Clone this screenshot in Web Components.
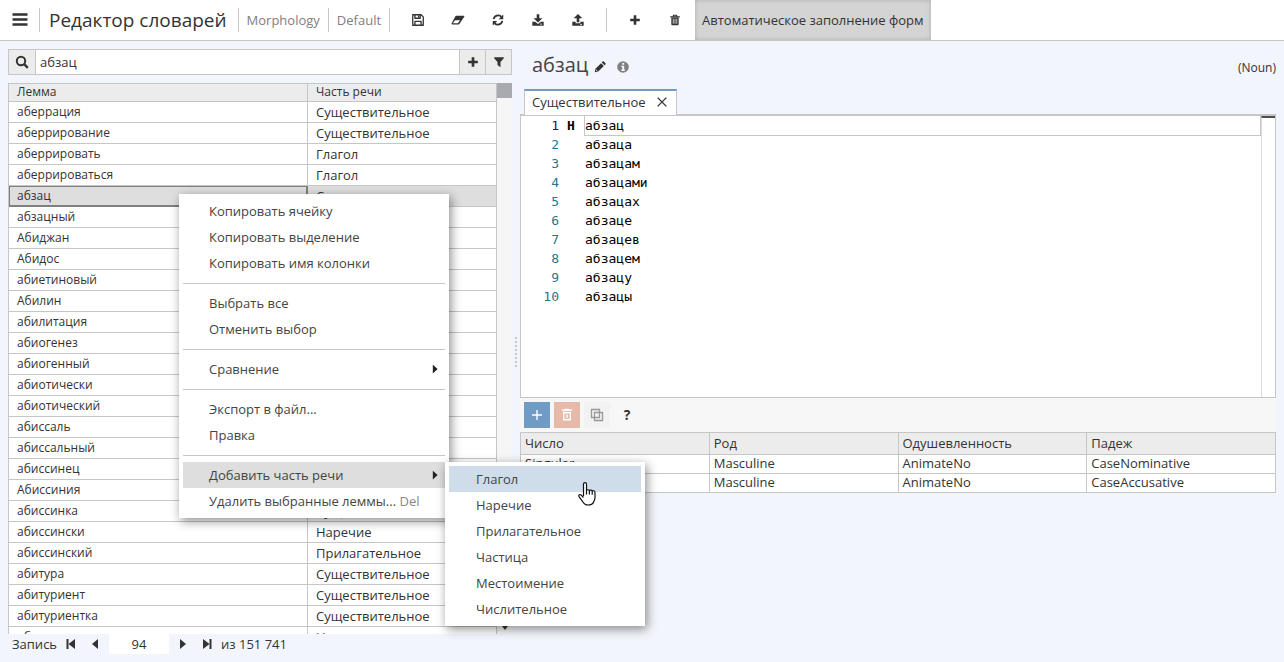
<!DOCTYPE html>
<html lang="ru">
<head>
<meta charset="utf-8">
<title>Редактор словарей</title>
<style>
html, body { margin: 0; height: 100%; }
body {
  --line: #c6c6c6;
  --head: #ececec;
  --page: #f2f5fb;
  --ink: #333;
  background: var(--page);
  color: var(--ink);
  font: 13px/20px "Open Sans", "Noto Sans", sans-serif;
}
</style>
</head>
<body>
<dict-app></dict-app>
<script>
const reset = `
  *, *::before, *::after { box-sizing: border-box; }
  button, input { font: inherit; color: inherit; margin: 0; padding: 0; border: 0; background: none; border-radius: 0; outline: 0; }
  button { display: flex; align-items: center; justify-content: center; }
`;

function define(name, html, setup) {
  const tpl = document.createElement('template');
  tpl.innerHTML = html;
  customElements.define(name, class extends HTMLElement {
    constructor() {
      super();
      this.attachShadow({ mode: 'open' }).append(tpl.content.cloneNode(true));
    }
    connectedCallback() { if (setup) setup(this, this.shadowRoot); }
  });
}

const icons = {
  menu: '<path d="M0.500 2.500h15M.5 7.500h15M.5 12.500h15" stroke="currentColor" stroke-width="2.300"/>',
  save: '<path d="M2 2h9.600L14 4.400V14H2z M4.500 14V9.500h7V14 M4.500 2v4h6V2" fill="none" stroke="currentColor" stroke-width="1.500" stroke-linejoin="round"/><path d="M8 2.500h1.500v2.500H8z" fill="currentColor"/>',
  eraser: '<path d="M6.200 3h8.300c.7 0 1 .7.600 1.300L9.800 12.300c-.3.400-.7.700-1.200.7H1.400c-.7 0-1-.7-.6-1.300L5 3.700c.3-.4.700-.7 1.200-.7zM7.900 11.700l2.500-3.400H4.600l-2.500 3.400z" fill="currentColor" fill-rule="evenodd"/>',
  refresh: '<path d="M3 7a5.200 5.200 0 0 1 9-2.500M13 9a5.200 5.200 0 0 1-9 2.500" fill="none" stroke="currentColor" stroke-width="2"/><path d="M14 1.800V7H8.800zM2 14.200V9h5.200z" fill="currentColor"/>',
  download: '<path d="M6.500 1.500h3V6H13L8 10.800 3 6h3.500zM1.500 10h3.300L8 12.500 11.200 10h3.300v4.500h-13z" fill="currentColor"/><path d="M10.500 12.700h2" stroke="#fff"/>',
  upload: '<path d="M6.500 10.500h3V6H13L8 1.200 3 6h3.500zM1.500 10h3.800v1.800h5.400V10h3.800v4.500h-13z" fill="currentColor"/><path d="M10.500 13h2" stroke="#fff"/>',
  plus: '<path d="M8 2.500v11M2.500 8h11" stroke="currentColor" stroke-width="3"/>',
  trash: '<path d="M6.200 4V2.600h3.600V4M2.500 4.500h11" fill="none" stroke="currentColor" stroke-width="1.300"/><path d="M3.800 5h8.400v7.500c0 1-.5 1.500-1.300 1.500H5.100c-.8 0-1.300-.5-1.300-1.500z" fill="currentColor"/><path d="M6 6.500v5.800M8 6.500v5.800M10 6.500v5.800" stroke="#fff" stroke-width=".8"/>',
  search: '<circle cx="7" cy="7" r="4.200" fill="none" stroke="currentColor" stroke-width="2"/><path d="M10.200 10.200l3.600 3.600" stroke="currentColor" stroke-width="2.400"/>',
  filter: '<path d="M2.500 2.500h11v1.300L9.700 7.900V14L6.300 11.500V7.900L2.500 3.800z" fill="currentColor"/>',
  pencil: '<path d="M2 14l.8-4L9.200 3.600l3.200 3.200L6 13.200zM10 2.800l1-1c.4-.4.900-.4 1.300 0l1.900 1.900c.4.400.4.900 0 1.300l-1 1z" fill="currentColor"/><path d="M3.200 11l1.800 1.800" stroke="#f2f5fb"/>',
  info: '<circle cx="8" cy="8" r="5.800" fill="#808080"/><path d="M7.200 4h2v1.800h-2zM6.300 6.800h2.900v3.900h.8v1.200H6.300v-1.200h.9V8h-.9z" fill="#f2f5fb"/>',
  close: '<path d="M3 3l10 10M13 3L3 13" stroke="currentColor" stroke-width="1.600"/>',
  add: '<path d="M8 3v10M3 8h10" stroke="#fff" stroke-width="1.400"/>',
  bin: '<path d="M3.200 3.200h9.600" stroke="#fff" stroke-width="1.800"/><path d="M6 2.500h4M4.700 5.800h6.600v7H4.700z M8 7.600v3.400" fill="none" stroke="#fff" stroke-width="1.400"/>',
  copy: '<path d="M2.500 2.500h8v8h-8zM5.500 5.500h8v8h-8z" fill="none" stroke="#999" stroke-width="1.300"/>',
  right: '<path d="M5.500 3l5.500 5-5.500 5z" fill="currentColor"/>',
  prev: '<path d="M11 3v10L5 8z" fill="currentColor"/>',
  next: '<path d="M5 3v10l6-5z" fill="currentColor"/>',
  first: '<path d="M4.500 3v10" stroke="currentColor" stroke-width="2"/><path d="M12 3v10L5.500 8z" fill="currentColor"/>',
  last: '<path d="M11.500 3v10" stroke="currentColor" stroke-width="2"/><path d="M4 3v10l6.500-5z" fill="currentColor"/>'
};

define('ui-icon', `<style>
  :host { display: block; width: 14px; height: 14px; flex: none; }
  svg { display: block; width: 100%; height: 100%; }
</style><svg viewBox="0 0 16 16" aria-hidden="true"></svg>`, (el, root) => {
  root.querySelector('svg').innerHTML = icons[el.getAttribute('name')];
});

define('app-toolbar', `<style>${reset}
  :host { display: flex; align-items: center; height: 41px; background: #fff; border-bottom: 1px solid var(--line); }
  button { width: 40px; height: 40px; }
  .menu { width: 39px; }
  .menu ui-icon { width: 16px; height: 16px; }
  h1 { margin: 0; padding: 0 11px 0 9px; font-size: 19px; line-height: 24px; font-weight: 400; }
  h1, a, .group { border-left: 1px solid var(--line); }
  a { color: #808080; text-decoration: none; padding: 0 8px; line-height: 24px; }
  .group { display: flex; align-items: center; height: 24px; padding-left: 8px; }
  .group + .group { margin-left: 8px; }
  .auto { width: auto; padding: 0 7px; background: #d4d4d4; border: 0; box-shadow: inset 0 0 4px #aaa; }
</style>
<button class="menu" aria-label="Меню"><ui-icon name="menu"></ui-icon></button>
<h1>Редактор словарей</h1>
<a href="#morphology">Morphology</a>
<a href="#default">Default</a>
<div class="group">
  <button aria-label="Сохранить"><ui-icon name="save"></ui-icon></button>
  <button aria-label="Очистить"><ui-icon name="eraser"></ui-icon></button>
  <button aria-label="Обновить"><ui-icon name="refresh"></ui-icon></button>
  <button aria-label="Импорт"><ui-icon name="download"></ui-icon></button>
  <button aria-label="Экспорт"><ui-icon name="upload"></ui-icon></button>
</div>
<div class="group">
  <button aria-label="Добавить"><ui-icon name="plus"></ui-icon></button>
  <button aria-label="Удалить"><ui-icon name="trash"></ui-icon></button>
</div>
<button class="auto" aria-pressed="true">Автоматическое заполнение форм</button>`);

define('search-bar', `<style>${reset}
  :host { display: flex; height: 26px; border: 1px solid var(--line); background: #fff; }
  label, button { flex: none; display: flex; align-items: center; justify-content: center; width: 26px; background: var(--head); }
  label { border-right: 1px solid var(--line); width: 27px; }
  label ui-icon { width: 16px; height: 16px; }
  button { border-left: 1px solid var(--line); }
  input { flex: 1; min-width: 0; padding: 0 4px; }
</style>
<label for="q" aria-label="Поиск"><ui-icon name="search"></ui-icon></label>
<input id="q" type="text" value="абзац">
<button aria-label="Добавить"><ui-icon name="plus"></ui-icon></button>
<button aria-label="Фильтр"><ui-icon name="filter"></ui-icon></button>`);

const N = 'Существительное', V = 'Глагол', A = 'Прилагательное', D = 'Наречие';
const lemmas = [
  ['аберрация', N], ['аберрирование', N], ['аберрировать', V], ['аберрироваться', V],
  ['абзац', N], ['абзацный', A], ['Абиджан', N], ['Абидос', N], ['абиетиновый', A],
  ['Абилин', N], ['абилитация', N], ['абиогенез', N], ['абиогенный', A], ['абиотически', D],
  ['абиотический', A], ['абиссаль', N], ['абиссальный', A], ['абиссинец', N], ['Абиссиния', N],
  ['абиссинка', N], ['абиссински', D], ['абиссинский', A], ['абитура', N], ['абитуриент', N],
  ['абитуриентка', N], ['абитуриентски', D]
];

define('lemma-table', `<style>${reset}
  :host { display: flex; min-height: 0; overflow: hidden; }
  .view { flex: 1; min-width: 0; overflow: hidden; }
  table { width: 100%; border-collapse: separate; border-spacing: 0; table-layout: fixed; border-left: 1px solid var(--line); background: #fff; }
  th, td { padding: 0 8px; text-align: left; font-weight: 400; border-right: 1px solid var(--line); border-bottom: 1px solid var(--line); white-space: nowrap; overflow: hidden; }
  th { height: 19px; line-height: 16px; vertical-align: top; font-size: 12px; background: var(--head); border-top: 1px solid var(--line); }
  td { height: 21px; line-height: 20px; }
  td:first-child { font-size: 12px; }
  th:first-child { width: 299px; }
  tr.on td { background: #dedede; }
  tr.on td:first-child { box-shadow: inset 0 -1px #808080, inset -1px 0 #808080, inset 1px 1px #808080; border-color: #808080; }
  .bar { flex: none; width: 15px; background: #f6f6f6; display: flex; flex-direction: column; justify-content: space-between; align-items: center; padding-bottom: 4px; }
  .bar::before { content: ""; width: 15px; height: 15px; background: #a9aab0; }
  .bar::after { content: ""; border: 3px solid transparent; border-top: 4px solid #333; border-bottom: 0; }
</style>
<div class="view"><table><thead><tr><th>Лемма</th><th>Часть речи</th></tr></thead><tbody></tbody></table></div>
<div class="bar"></div>`, (el, root) => {
  root.querySelector('tbody').innerHTML = lemmas.map(([w, p]) =>
    `<tr${w === 'абзац' ? ' class="on"' : ''}><td>${w}</td><td>${p}</td></tr>`).join('');
});

define('record-pager', `<style>${reset}
  :host { display: flex; align-items: center; height: 28px; padding: 0 4px 8px; flex: none; }
  button { width: 24px; height: 20px; }
  label { padding-right: 2px; }
  ui-icon { width: 16px; height: 16px; }
  input { width: 60px; height: 20px; margin: 0 2px; background: #fff; text-align: center; border-radius: 2px; }
  span { padding-left: 2px; }
</style>
<label for="rec">Запись</label>
<button aria-label="Первая"><ui-icon name="first"></ui-icon></button>
<button aria-label="Предыдущая"><ui-icon name="prev"></ui-icon></button>
<input id="rec" type="text" value="94">
<button aria-label="Следующая"><ui-icon name="next"></ui-icon></button>
<button aria-label="Последняя"><ui-icon name="last"></ui-icon></button>
<span>из 151 741</span>`);

define('entry-header', `<style>${reset}
  :host { display: flex; align-items: center; height: 48px; padding-left: 12px; }
  h2 { margin: 0; font-size: 20px; line-height: 24px; font-weight: 400; color: #444; }
  button { margin: 4px 0 0 5px; }
  button + button { margin-left: 8px; }
  button + button ui-icon { width: 16px; height: 16px; }
  span { margin-left: auto; padding-top: 6px; font-size: 12px; }
</style>
<h2>абзац</h2>
<button aria-label="Изменить"><ui-icon name="pencil"></ui-icon></button>
<button aria-label="Сведения"><ui-icon name="info"></ui-icon></button>
<span>(Noun)</span>`);

define('form-editor', `<style>${reset}
  :host { display: flex; flex-direction: column; min-height: 0; }
  .tabs { display: flex; padding-left: 4px; border-bottom: 2px solid var(--line); }
  .tab { display: flex; align-items: center; gap: 9px; height: 27px; margin-bottom: -2px; padding: 0 7px 2px; background: #fff; border: 1px solid var(--line); border-top: 2px solid #729ac3; }
  .body { flex: 1; min-height: 0; display: flex; background: #fff; border: 1px solid var(--line); border-top: 0; }
  ol { flex: 1; min-width: 0; list-style: none; margin: 0; padding: 0; color: #000; font: 13px/19px "DejaVu Sans Mono", "Liberation Mono", monospace; overflow: hidden; }
  li { display: grid; grid-template-columns: 38px 26px 1fr; height: 19px; }
  i { font-style: normal; text-align: right; color: #237893; }
  b { padding-left: 8px; }
  li:first-child i { color: #0b216f; }
  li:first-child span { border: 1px solid var(--line); border-top: 0; line-height: 19px; margin-left: -1px; }
  .ruler { flex: none; width: 14px; border-left: 1px solid #ddd; border-top: 2px solid #4d4d4d; }
</style>
<div class="tabs"><div class="tab">Существительное<button aria-label="Закрыть"><ui-icon name="close"></ui-icon></button></div></div>
<div class="body"><ol></ol><div class="ruler"></div></div>`, (el, root) => {
  const forms = ['абзац', 'абзаца', 'абзацам', 'абзацами', 'абзацах', 'абзаце', 'абзацев', 'абзацем', 'абзацу', 'абзацы'];
  root.querySelector('ol').innerHTML = forms.map((f, i) =>
    `<li><i>${i + 1}</i><b>${i ? '' : 'Н'}</b><span>${f}</span></li>`).join('');
});

define('feature-grid', `<style>${reset}
  :host { display: block; }
  .tools { display: flex; gap: 4px; padding: 4px; background: #f7f7f7; }
  .tools button { width: 26px; height: 26px; background: #f2f2f2; }
  .tools ui-icon { width: 16px; height: 16px; }
  .tools .add { background: #6f9bc4; }
  .tools .del { background: #e7b9a8; }
  .tools .help { background: none; font-weight: 700; font-size: 14px; }
  table { width: 100%; border-collapse: collapse; table-layout: fixed; background: #fff; }
  th, td { border: 1px solid var(--line); padding: 0 4px; text-align: left; vertical-align: top; font-weight: 400; height: 19px; line-height: 17px; }
  th { height: 22px; line-height: 20px; background: var(--head); }
</style>
<div class="tools">
  <button class="add" aria-label="Добавить"><ui-icon name="add"></ui-icon></button>
  <button class="del" aria-label="Удалить"><ui-icon name="bin"></ui-icon></button>
  <button aria-label="Копировать"><ui-icon name="copy"></ui-icon></button>
  <button class="help">?</button>
</div>
<table>
  <thead><tr><th>Число</th><th>Род</th><th>Одушевленность</th><th>Падеж</th></tr></thead>
  <tbody>
    <tr><td>Singular</td><td>Masculine</td><td>AnimateNo</td><td>CaseNominative</td></tr>
    <tr><td>Singular</td><td>Masculine</td><td>AnimateNo</td><td>CaseAccusative</td></tr>
  </tbody>
</table>`);

define('menu-item', `<style>${reset}
  :host { display: block; }
  button { width: 100%; height: 26px; padding: 0 3px 0 var(--indent, 26px); justify-content: flex-start; text-align: left; white-space: nowrap; color: #444; }
  :host([active]) button { background: #dedede; }
  :host([hot]) button { background: #cfdce9; }
  ui-icon { display: none; margin-left: auto; color: #222; }
  :host([more]) ui-icon { display: block; }
</style><button role="menuitem"><slot></slot><ui-icon name="right"></ui-icon></button>`);

define('popup-menu', `<style>${reset}
  :host { display: block; padding: 4px; background: #fff; box-shadow: 2px 3px 10px rgba(0,0,0,.45); }
  ::slotted(hr) { border: 0; border-top: 1px solid var(--line); margin: 7px 0 6px; }
</style><slot></slot>`);

define('hand-pointer', `<style>
  :host { display: block; width: 18px; height: 24px; }
  svg { display: block; }
</style><svg width="18" height="24" viewBox="0 0 18 24" aria-hidden="true">
<path d="M5.500 14V2.200c0-2 3-2 3 0V9c0-1.800 2.900-1.600 2.900.2 0-1.600 2.800-1.400 2.800.4 0-1.400 2.800-1.200 2.800.8v5.300c0 2-.8 3-1.500 4.500-.8 1.800-2.300 2.800-5 2.800-3 0-4.500-1-5.800-3.300L1 14.600c-.8-1.600 1-2.800 2.300-1.500L5.500 15.500M8.500 9v3.500M11.400 9v3.500M14.200 9.800v3" fill="#fff" stroke="#111" stroke-width="1.200" stroke-linejoin="round"/></svg>`);

define('dict-app', `<style>${reset}
  :host { position: relative; display: flex; flex-direction: column; height: 100vh; overflow: hidden; }
  main { flex: 1; min-height: 0; display: grid; grid-template-columns: minmax(0, 2fr) 8px minmax(0, 3fr); padding: 0 8px; }
  section { display: flex; flex-direction: column; min-width: 0; min-height: 0; }
  .left { padding-top: 8px; }
  search-bar { margin-bottom: 8px; flex: none; }
  lemma-table, form-editor { flex: 1; }
  feature-grid { flex: 0 0 264px; }
  .split { display: flex; align-items: center; padding-left: 3px; }
  .split::before { content: ""; width: 2px; height: 30px; background: repeating-linear-gradient(#c4c7cc 0 2px, transparent 2px 4px); }
  .menu, .submenu, .pointer { position: absolute; }
  .menu { left: 179px; top: 194px; width: 270px; }
  .submenu { left: 445px; top: 462px; width: 200px; --indent: 27px; }
  .pointer { left: 578px; top: 482px; }
  kbd { font: inherit; color: #888; }
</style>
<app-toolbar></app-toolbar>
<main>
  <section class="left"><search-bar></search-bar><lemma-table></lemma-table><record-pager></record-pager></section>
  <div class="split"></div>
  <section><entry-header></entry-header><form-editor></form-editor><feature-grid></feature-grid></section>
</main>
<popup-menu class="menu" role="menu">
  <menu-item>Копировать ячейку</menu-item>
  <menu-item>Копировать выделение</menu-item>
  <menu-item>Копировать имя колонки</menu-item>
  <hr>
  <menu-item>Выбрать все</menu-item>
  <menu-item>Отменить выбор</menu-item>
  <hr>
  <menu-item more>Сравнение</menu-item>
  <hr>
  <menu-item>Экспорт в файл...</menu-item>
  <menu-item>Правка</menu-item>
  <hr>
  <menu-item more active>Добавить часть речи</menu-item>
  <menu-item>Удалить выбранные леммы...&nbsp;<kbd>Del</kbd></menu-item>
</popup-menu>
<popup-menu class="submenu" role="menu">
  <menu-item hot>Глагол</menu-item>
  <menu-item>Наречие</menu-item>
  <menu-item>Прилагательное</menu-item>
  <menu-item>Частица</menu-item>
  <menu-item>Местоимение</menu-item>
  <menu-item>Числительное</menu-item>
</popup-menu>
<hand-pointer class="pointer"></hand-pointer>`);
</script>
</body>
</html>
